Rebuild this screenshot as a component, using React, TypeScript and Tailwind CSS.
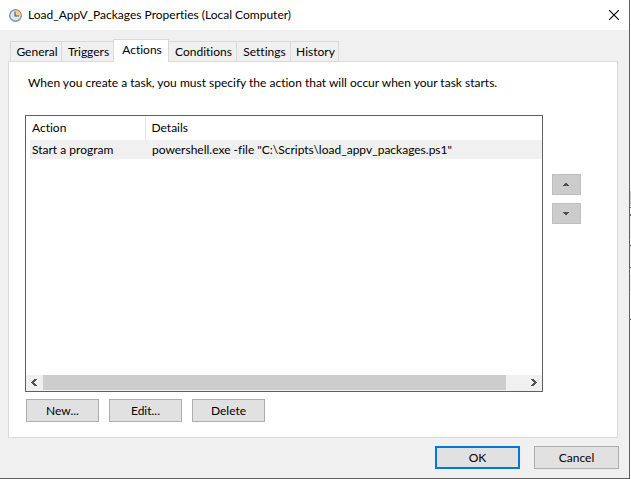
import { useState } from "react";
import { clsx } from "clsx";

const tabs = [
  { name: "General", width: "w-[52px]" },
  { name: "Triggers", width: "w-[52px]" },
  { name: "Actions", width: "w-14" },
  { name: "Conditions", width: "w-[68px]" },
  { name: "Settings", width: "w-[54px]" },
  { name: "History", width: "w-12" },
];

const actions = [
  {
    action: "Start a program",
    details: 'powershell.exe -file "C:\\Scripts\\load_appv_packages.ps1"',
  },
];

const ClockIcon = () => (
  <svg width="14" height="14" viewBox="0 0 14 14" className="shrink-0">
    <circle cx="7.5" cy="7.5" r="5.8" fill="#dde8f2" stroke="#8e9296" strokeWidth="1.4" />
    <path d="M7.5 8V2.2A5.2 5.2 0 0 1 12.7 8Z" fill="#f5cd8b" />
    <path d="M7 3.5V8h4" fill="none" stroke="#555b61" strokeWidth="1.2" />
  </svg>
);

const PushButton = ({ label, primary = false, wide = false }: { label: string; primary?: boolean; wide?: boolean }) => (
  <button
    type="button"
    className={clsx(
      "flex h-[23px] items-center justify-center bg-[#e1e1e1]",
      primary ? "border-2 border-[#0078d7]" : "border border-[#adadad]",
      wide ? "w-[85px]" : "w-[73px]"
    )}
  >
    {label}
  </button>
);

const MoveButton = ({ label, path }: { label: string; path: string }) => (
  <button
    type="button"
    aria-label={label}
    className="flex h-[21px] w-[29px] items-center justify-center border border-[#bfbfbf] bg-[#cccccc]"
  >
    <svg width="7" height="3" viewBox="0 0 7 3" shapeRendering="crispEdges">
      <path d={path} fill="#505050" />
    </svg>
  </button>
);

const ScrollArrow = ({ label, path }: { label: string; path: string }) => (
  <button type="button" aria-label={label} className="flex w-[17px] shrink-0 items-center justify-center">
    <svg width="7" height="7" viewBox="0 0 7 7" shapeRendering="crispEdges">
      <path d={path} fill="#505050" />
    </svg>
  </button>
);

// Sliver of the window that sits behind the dialog
const BackgroundWindow = () => (
  <div className="w-px shrink-0 bg-white">
    <div className="mt-[191px] h-[15px] bg-[#cccccc]" />
    <div className="mt-px h-px bg-[#606060]" />
    <div className="mt-[6px] h-[2px] bg-[#707070]" />
    <div className="h-[22px] bg-[#f0f0f0]" />
    <div className="mt-[7px] h-px bg-[#606060]" />
    <div className="h-[21px] bg-[#f0f0f0]" />
    <div className="h-px bg-[#606060]" />
    <div className="mt-[7px] h-4 bg-[#f0f0f0]" />
    <div className="mt-7 h-px bg-[#606060]" />
  </div>
);

const App = () => {
  const [activeTab, setActiveTab] = useState("Actions");

  return (
    <div className="flex min-h-screen font-['Lato','Open_Sans',sans-serif] text-[12px] leading-4 text-black [font-variant-ligatures:none]">
      <div className="flex min-w-0 flex-1 flex-col border-r border-b border-[#606060] bg-[#f0f0f0]">
        {/* Title bar */}
        <header className="flex h-[30px] items-center bg-white pl-2">
          <ClockIcon />
          <h1 className="ml-[6px] flex-1">Load_AppV_Packages Properties (Local Computer)</h1>
          <button type="button" aria-label="Close" className="flex h-[30px] w-[30px] items-center justify-center">
            <svg width="10" height="10" viewBox="0 0 10 10">
              <path d="M0 0L10 10M10 0L0 10" stroke="#000" strokeWidth="1.1" />
            </svg>
          </button>
        </header>

        {/* Tabs */}
        <div role="tablist" className="z-10 -mb-px flex h-8 items-end pt-[9px] pl-[10px]">
          {tabs.map((tab) => (
            <button
              key={tab.name}
              type="button"
              role="tab"
              aria-selected={tab.name === activeTab}
              onClick={() => setActiveTab(tab.name)}
              className={clsx(
                "flex justify-center border-t border-r border-[#d9d9d9] pt-[2px] pl-[2px] whitespace-nowrap first:border-l",
                tab.width,
                tab.name === activeTab ? "-ml-px h-[23px] border-l bg-white" : "h-[21px] border-b bg-[#f0f0f0]"
              )}
            >
              {tab.name}
            </button>
          ))}
        </div>

        {/* Actions page */}
        <main className="mr-[11px] ml-2 flex flex-1 flex-col border border-[#d9d9d9] bg-white px-4 pt-[13px] pb-[15px]">
          <p className="ml-[3px]">When you create a task, you must specify the action that will occur when your task starts.</p>

          <div className="mt-6 flex flex-1 gap-[9px]">
            <div className="flex min-w-0 flex-1 flex-col border border-[#606060]">
              <table className="w-full table-fixed border-collapse">
                <colgroup>
                  <col className="w-1" />
                  <col className="w-[115px]" />
                  <col />
                </colgroup>
                <thead>
                  <tr className="h-6 text-left">
                    <td />
                    <th className="border-r border-[#e5e5e5] pl-[2px] font-normal">Action</th>
                    <th className="pl-[6px] font-normal">Details</th>
                  </tr>
                </thead>
                <tbody>
                  {actions.map((row) => (
                    <tr key={row.details} className="h-[19px]">
                      <td />
                      <td className="bg-[#f0f0f0] pl-[2px]">{row.action}</td>
                      <td className="bg-[#f0f0f0] pl-[7px]">{row.details}</td>
                    </tr>
                  ))}
                </tbody>
              </table>

              {/* Horizontal scrollbar */}
              <div className="mt-auto flex h-4 bg-[#f0f0f0] pb-px">
                <ScrollArrow label="Scroll left" path="M3 0h3v1H5v1H4v1H3v1h1v1h1v1h1v1H3V6H2V5H1V4H0V3h1V2h1V1h1z" />
                <div className="flex-1">
                  <div className="h-full w-[96%] bg-[#cdcdcd]" />
                </div>
                <ScrollArrow label="Scroll right" path="M4 0H1v1h1v1h1v1h1v1H3v1H2v1H1v1h3V6h1V5h1V4h1V3H6V2H5V1H4z" />
              </div>
            </div>

            <div className="mr-5 flex flex-col gap-2 pt-[59px]">
              <MoveButton label="Move up" path="M2 0h2v1h1v1h1v1H0V2h1V1h1z" />
              <MoveButton label="Move down" path="M0 0h6v1H5v1H4v1H2V2H1V1H0z" />
            </div>
          </div>

          <div className="mt-[7px] ml-px flex gap-[10px]">
            <PushButton label="New..." />
            <PushButton label="Edit..." />
            <PushButton label="Delete" />
          </div>
        </main>

        {/* Dialog buttons */}
        <footer className="flex justify-end gap-[14px] px-[10px] pt-2 pb-[9px]">
          <PushButton label="OK" primary wide />
          <PushButton label="Cancel" wide />
        </footer>
      </div>
      <BackgroundWindow />
    </div>
  );
};

export default App;
